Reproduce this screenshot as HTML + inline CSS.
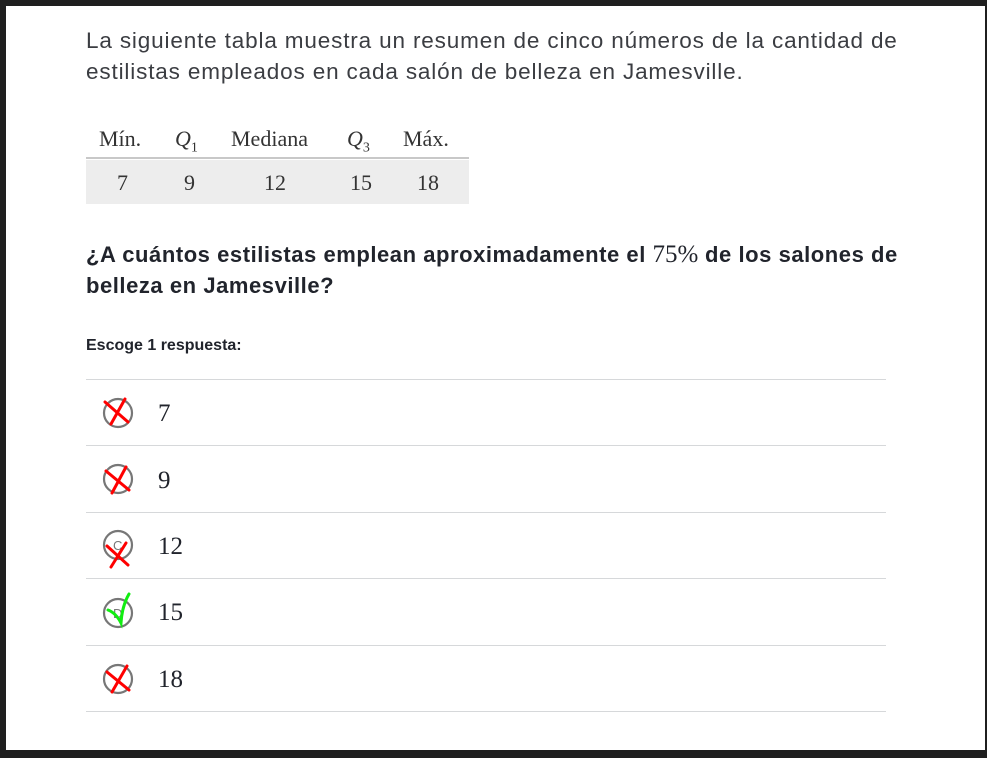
<!DOCTYPE html>
<html><head><meta charset="utf-8"><style>
html,body{margin:0;padding:0}
body{width:987px;height:758px;background:#1f1f1f;position:relative;overflow:hidden;font-family:"Liberation Sans",sans-serif;color:#21242c}
.page{position:absolute;left:6px;top:6px;width:979px;height:744px;background:#fff}
.t{position:absolute;white-space:nowrap}
.p{left:80px;font-size:22.5px;letter-spacing:0.85px;color:#3b3d42}
.q{left:80px;font-size:22px;letter-spacing:0.55px;font-weight:bold;color:#21242c}
.serif{font-family:"Liberation Serif",serif}
.row{position:absolute;left:80px;width:800px;height:1px;background:#d6d8da}
.num{position:absolute;left:152px;font-family:"Liberation Serif",serif;font-size:25px;color:#21242c}
svg{position:absolute}
.tb{font-size:22px;color:#333}
</style></head><body><div class="page">
<div class="t p" style="top:22px">La siguiente tabla muestra un resumen de cinco números de la cantidad de</div>
<div class="t p" style="top:53px">estilistas empleados en cada salón de belleza en Jamesville.</div>

<div style="position:absolute;left:80px;top:154px;width:383px;height:44px;background:#ededed"></div>
<div style="position:absolute;left:80px;top:151px;width:383px;height:2px;background:#c8c8c8"></div>
<div class="t serif tb" style="left:93px;top:120px">Mín.</div>
<div class="t serif tb" style="left:169px;top:120px"><i>Q</i><sub style="font-size:14px">1</sub></div>
<div class="t serif tb" style="left:225px;top:120px">Mediana</div>
<div class="t serif tb" style="left:341px;top:120px"><i>Q</i><sub style="font-size:14px">3</sub></div>
<div class="t serif tb" style="left:397px;top:120px">Máx.</div>
<div class="t serif tb" style="left:111px;top:164px">7</div>
<div class="t serif tb" style="left:178px;top:164px">9</div>
<div class="t serif tb" style="left:258px;top:164px">12</div>
<div class="t serif tb" style="left:344px;top:164px">15</div>
<div class="t serif tb" style="left:411px;top:164px">18</div>

<div class="t q" style="top:235px">¿A cuántos estilistas emplean aproximadamente el <span class="serif" style="font-weight:normal;font-size:25px;letter-spacing:0">75%</span> de los salones de</div>
<div class="t q" style="top:267px">belleza en Jamesville?</div>
<div class="t" style="left:80px;top:331px;font-size:16px;font-weight:bold">Escoge 1 respuesta:</div>

<div class="row" style="top:373px"></div>
<div class="row" style="top:439px"></div>
<div class="row" style="top:506px"></div>
<div class="row" style="top:572px"></div>
<div class="row" style="top:639px"></div>
<div class="row" style="top:705px"></div>

<div class="num" style="top:394px">7</div>
<div class="num" style="top:461px">9</div>
<div class="num" style="top:527px">12</div>
<div class="num" style="top:593px">15</div>
<div class="num" style="top:660px">18</div>

<svg style="left:94px;top:390px" width="40" height="40" viewBox="0 0 40 40"><circle cx="18" cy="17" r="14" fill="none" stroke="#777" stroke-width="2.2"/><path d="M5 6 L28 26 M25 3 L11 28" stroke="#f00" stroke-width="3" fill="none" stroke-linecap="round"/></svg>
<svg style="left:94px;top:456px" width="40" height="40" viewBox="0 0 40 40"><circle cx="18" cy="17" r="14" fill="none" stroke="#777" stroke-width="2.2"/><path d="M6 9 L29 28 M26 5 L12 31" stroke="#f00" stroke-width="3" fill="none" stroke-linecap="round"/></svg>
<svg style="left:94px;top:522px" width="40" height="45" viewBox="0 0 40 45"><circle cx="18" cy="17" r="14" fill="none" stroke="#777" stroke-width="2.2"/><text x="13" y="22" font-size="13" fill="#777" font-family="Liberation Sans">C</text><path d="M7 18 L28 37 M26 15 L11 39" stroke="#f00" stroke-width="3" fill="none" stroke-linecap="round"/></svg>
<svg style="left:94px;top:580px" width="40" height="50" viewBox="0 0 40 50"><circle cx="18" cy="27" r="14" fill="none" stroke="#777" stroke-width="2.2"/><text x="13" y="32" font-size="13" fill="#777" font-family="Liberation Sans">D</text><path d="M8 24 Q16 27 21 37 Q22 20 29 8" stroke="#1e1" stroke-width="3" fill="none" stroke-linecap="round"/></svg>
<svg style="left:94px;top:656px" width="40" height="40" viewBox="0 0 40 40"><circle cx="18" cy="17" r="14" fill="none" stroke="#777" stroke-width="2.2"/><path d="M7 10 L29 28 M27 4 L12 30" stroke="#f00" stroke-width="3" fill="none" stroke-linecap="round"/></svg>
</div></body></html>
